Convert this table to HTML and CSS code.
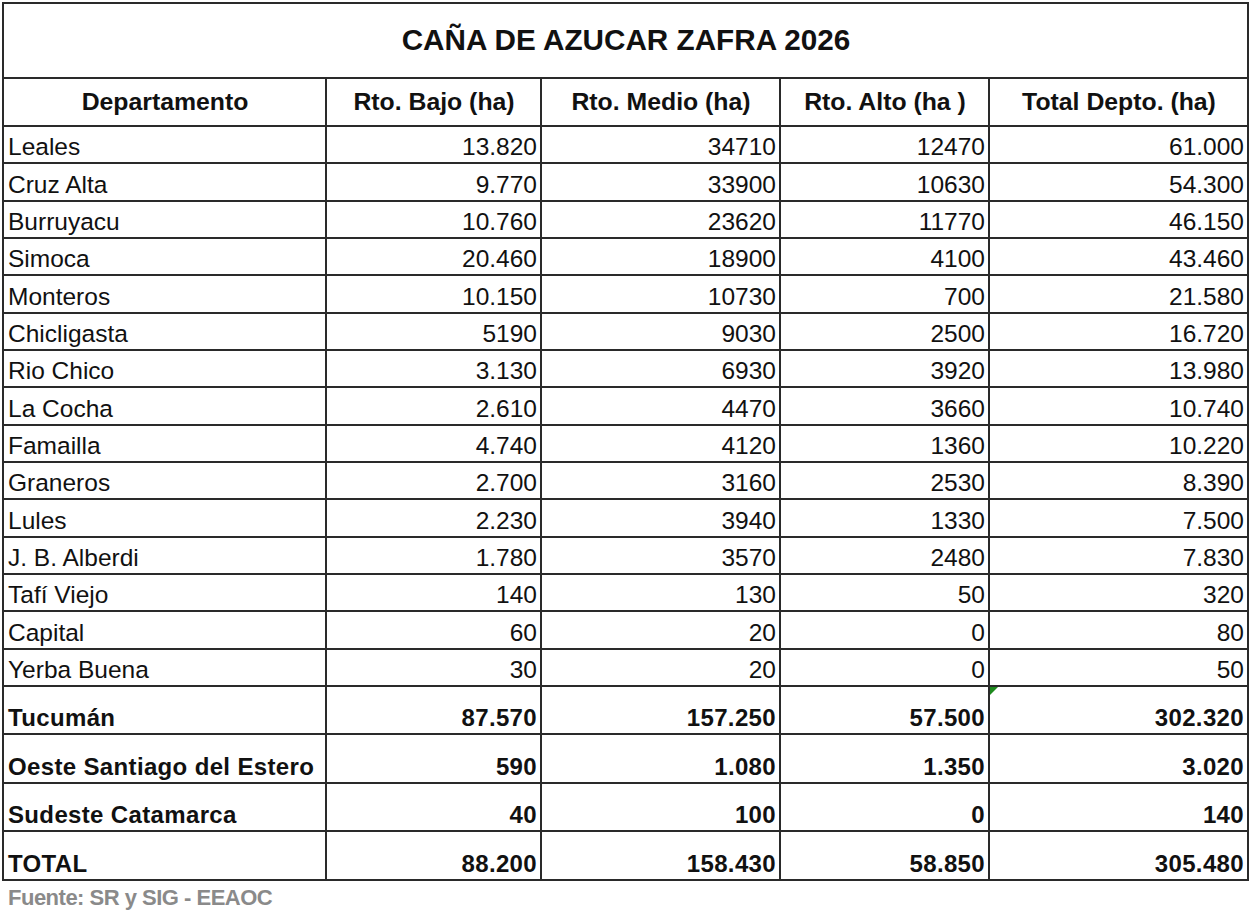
FILE: index.html
```html
<!DOCTYPE html>
<html lang="es">
<head>
  <meta charset="UTF-8">
  <title>Caña de Azucar Zafra 2026</title>
  <link rel="stylesheet" href="styles.css">
</head>
<body>
  <table class="zafra">
    <colgroup>
      <col class="c-depto">
      <col class="c-bajo">
      <col class="c-medio">
      <col class="c-alto">
      <col class="c-total">
    </colgroup>
    <thead>
      <tr class="title-row">
        <th colspan="5">CAÑA DE AZUCAR ZAFRA 2026</th>
      </tr>
      <tr class="head-row">
        <th>Departamento</th>
        <th>Rto. Bajo (ha)</th>
        <th>Rto. Medio (ha)</th>
        <th>Rto. Alto (ha )</th>
        <th>Total Depto. (ha)</th>
      </tr>
    </thead>
    <tbody>
      <tr><td>Leales</td><td>13.820</td><td>34710</td><td>12470</td><td>61.000</td></tr>
      <tr><td>Cruz Alta</td><td>9.770</td><td>33900</td><td>10630</td><td>54.300</td></tr>
      <tr><td>Burruyacu</td><td>10.760</td><td>23620</td><td>11770</td><td>46.150</td></tr>
      <tr><td>Simoca</td><td>20.460</td><td>18900</td><td>4100</td><td>43.460</td></tr>
      <tr><td>Monteros</td><td>10.150</td><td>10730</td><td>700</td><td>21.580</td></tr>
      <tr><td>Chicligasta</td><td>5190</td><td>9030</td><td>2500</td><td>16.720</td></tr>
      <tr><td>Rio Chico</td><td>3.130</td><td>6930</td><td>3920</td><td>13.980</td></tr>
      <tr><td>La Cocha</td><td>2.610</td><td>4470</td><td>3660</td><td>10.740</td></tr>
      <tr><td>Famailla</td><td>4.740</td><td>4120</td><td>1360</td><td>10.220</td></tr>
      <tr><td>Graneros</td><td>2.700</td><td>3160</td><td>2530</td><td>8.390</td></tr>
      <tr><td>Lules</td><td>2.230</td><td>3940</td><td>1330</td><td>7.500</td></tr>
      <tr><td>J. B. Alberdi</td><td>1.780</td><td>3570</td><td>2480</td><td>7.830</td></tr>
      <tr><td>Tafí Viejo</td><td>140</td><td>130</td><td>50</td><td>320</td></tr>
      <tr><td>Capital</td><td>60</td><td>20</td><td>0</td><td>80</td></tr>
      <tr><td>Yerba Buena</td><td>30</td><td>20</td><td>0</td><td>50</td></tr>
      <tr class="sum-row"><td>Tucumán</td><td>87.570</td><td>157.250</td><td>57.500</td><td class="flag">302.320</td></tr>
      <tr class="sum-row"><td>Oeste Santiago del Estero</td><td>590</td><td>1.080</td><td>1.350</td><td>3.020</td></tr>
      <tr class="sum-row"><td>Sudeste Catamarca</td><td>40</td><td>100</td><td>0</td><td>140</td></tr>
      <tr class="sum-row"><td>TOTAL</td><td>88.200</td><td>158.430</td><td>58.850</td><td>305.480</td></tr>
    </tbody>
  </table>
  <p class="source">Fuente: SR y SIG - EEAOC</p>
</body>
</html>
```

FILE: styles.css
```css
body {
  margin: 2px 0 0 2px;
  background-color: #fff;
  font-family: "Liberation Sans", Arial, sans-serif;
  color: #111;
}

.zafra {
  width: 1245px;
  table-layout: fixed;
  border-collapse: collapse;
  border: 2px solid #1c1c1c;
}

.c-depto { width: 323px; }
.c-bajo { width: 215px; }
.c-medio { width: 239px; }
.c-alto { width: 209px; }
.c-total { width: 259px; }

.zafra th,
.zafra td {
  border: 2px solid #2a2a2a;
  padding: 0 3px 1px 4px;
  font-size: 24.5px;
  white-space: nowrap;
}

.title-row th {
  height: 72px;
  font-size: 29.7px;
  font-weight: bold;
  text-align: center;
  vertical-align: middle;
}

.head-row th {
  height: 45px;
  font-size: 24.8px;
  font-weight: bold;
  text-align: center;
  vertical-align: middle;
}

.zafra tbody td {
  height: 34.33px;
  vertical-align: bottom;
  text-align: right;
}

.zafra tbody td:first-child {
  text-align: left;
}

.sum-row td {
  font-weight: bold;
}

.zafra tbody .sum-row td {
  height: 45.5px;
  font-size: 24px;
  letter-spacing: 0.35px;
}

.flag {
  position: relative;
}

.flag::before {
  content: "";
  position: absolute;
  left: 0;
  top: 0;
  border-top: 8px solid #1e8a1e;
  border-right: 8px solid transparent;
}

.source {
  margin: 4px 0 0 6px;
  font-size: 22px;
  font-weight: bold;
  letter-spacing: -0.5px;
  color: #8a8a8a;
}
```
